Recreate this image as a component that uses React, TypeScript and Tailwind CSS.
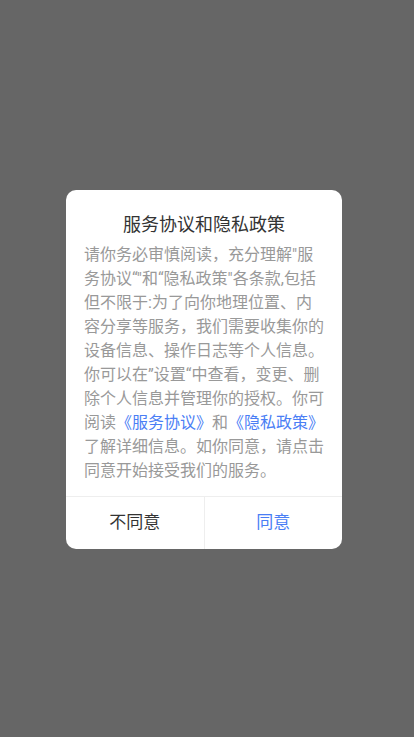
import React from "react";

const lines: React.ReactNode[] = [
  "请你务必审慎阅读，充分理解\"服",
  "务协议“\"和“隐私政策\"各条款,包括",
  "但不限于:为了向你地理位置、内",
  "容分享等服务，我们需要收集你的",
  "设备信息、操作日志等个人信息。",
  "你可以在”设置“中查看，变更、删",
  "除个人信息并管理你的授权。你可",
  <>
    阅读<span className="text-[#4a7ef5]">《服务协议》</span>和
    <span className="text-[#4a7ef5]">《隐私政策》</span>
  </>,
  "了解详细信息。如你同意，请点击",
  "同意开始接受我们的服务。",
];

export default function App() {
  return (
    <div
      className="h-[737px] w-[414px] bg-[#666666] flex items-start pt-[190px] pl-[66px]"
      style={{ fontFamily: 'Roboto, "Noto Sans CJK SC", sans-serif' }}
    >
      <div className="w-[276px] bg-white rounded-[10px] overflow-hidden">
        {/* Title */}
        <div className="pt-[20px] text-center text-[18px] leading-[30px] text-[#333333]">
          服务协议和隐私政策
        </div>

        {/* Body */}
        <div className="mt-[3px] px-[18px] pb-[13px] text-[16px] leading-[24px] text-[#999999]">
          {lines.map((l, i) => (
            <div key={i} className="whitespace-nowrap">
              {l}
            </div>
          ))}
        </div>

        {/* Buttons */}
        <div className="flex border-t border-[#eeeeee] h-[53px]">
          <button className="flex-1 text-[17px] text-[#333333] border-r border-[#eeeeee]">
            不同意
          </button>
          <button className="flex-1 text-[17px] text-[#4a7ef5]">同意</button>
        </div>
      </div>
    </div>
  );
}
